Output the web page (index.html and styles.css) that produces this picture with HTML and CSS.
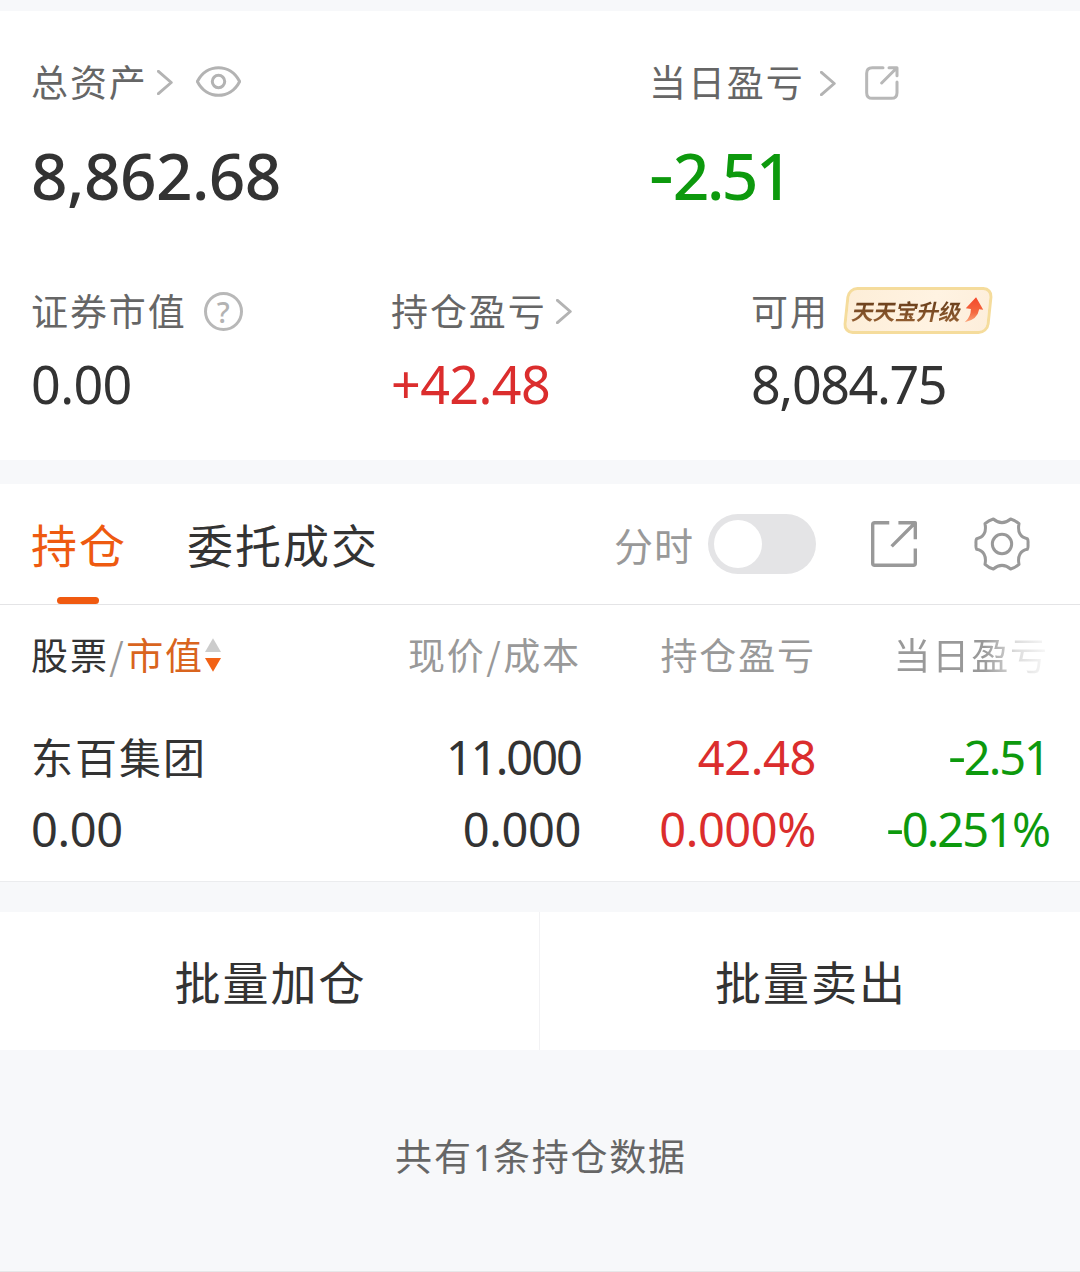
FILE: index.html
```html
<!DOCTYPE html>
<html lang="zh-CN">
<head>
<meta charset="utf-8">
<title>持仓</title>
<link rel="stylesheet" href="styles.css">
</head>
<body>
<main class="page">
  <section class="summary">
    <div class="totals">
      <div class="total">
        <div class="label">
          <span>总资产</span>
          <svg class="chevron chevron-total" viewBox="0 0 48 76"><path d="M4 4 43 38 4 72"/></svg>
          <svg class="eye" viewBox="0 0 134 92"><path d="M4 46C32-9 102-9 130 46 102 101 32 101 4 46Z"/><circle cx="67" cy="46" r="18.5"/></svg>
        </div>
        <div class="amount">8,862.68</div>
      </div>
      <div class="total">
        <div class="label">
          <span>当日盈亏</span>
          <svg class="chevron chevron-day" viewBox="0 0 48 76"><path d="M4 4 43 38 4 72"/></svg>
          <svg class="share-small" viewBox="0 0 102 102"><path d="M54 5H22Q5 5 5 22V80Q5 97 22 97H79Q96 97 96 80V48M72 5H96V29M95 6 50 51"/></svg>
        </div>
        <div class="amount amount-day down"><span class="sign">-</span>2.51</div>
      </div>
    </div>
    <div class="figures">
      <div class="figure">
        <div class="label"><span>证券市值</span><span class="help">?</span></div>
        <div class="value">0.00</div>
      </div>
      <div class="figure">
        <div class="label">
          <span>持仓盈亏</span>
          <svg class="chevron chevron-hold" viewBox="0 0 48 76"><path d="M4 4 43 38 4 72"/></svg>
        </div>
        <div class="value value-hold up">+42.48</div>
      </div>
      <div class="figure">
        <div class="label">
          <span>可用</span>
          <span class="badge">
            <span class="badge-text">天天宝升级</span>
            <svg class="badge-arrow" viewBox="0 0 56 76">
              <defs><linearGradient id="rise" x1="0" y1="0" x2="0" y2="1"><stop offset="0" stop-color="#f4472a"/><stop offset=".6" stop-color="#f4683f"/><stop offset="1" stop-color="#fba67c"/></linearGradient></defs>
              <path fill="url(#rise)" d="M34 1 55 37 43 36Q39 66 1 74 19 58 19 35L4 33Z"/>
            </svg>
          </span>
        </div>
        <div class="value value-free">8,084.75</div>
      </div>
    </div>
  </section>

  <section class="holdings">
    <nav class="tabs">
      <span class="tab tab-active">持仓</span>
      <span class="tab">委托成交</span>
      <div class="tools">
        <span class="tool-label">分时</span>
        <span class="switch"><span class="knob"></span></span>
        <svg class="share" viewBox="0 0 136 136"><path d="M54 5H11Q5 5 5 11V125Q5 131 11 131H125Q131 131 131 125V81M81 5H131V54M130 6 61 75"/></svg>
        <svg class="gear" viewBox="-90 -90 180 180"><path d="M-26-75Q0-53 26-75 40-71 51-61C46-36 55-20 76-16Q79-12 78 0 79 12 76 16C55 20 46 36 51 61Q40 71 26 75 0 53-26 75-40 71-51 61C-46 36-55 20-76 16Q-79 12-78 0-79-12-76-16C-55-20-46-36-51-61Q-40-71-26-75Z"/><circle r="29"/></svg>
      </div>
    </nav>

    <div class="row head">
      <div class="cell first"><span class="dark">股票</span><span class="slash">/</span><span class="accent">市值</span><svg class="sort" viewBox="0 0 49 103"><path fill="#ccc" d="M24.500 0 49 42H0Z"/><path fill="#f26215" d="M0 61H49L24.500 103Z"/></svg></div>
      <div class="cell">现价<span class="slash">/</span>成本</div>
      <div class="cell">持仓盈亏</div>
      <div class="cell fade">当日盈亏</div>
    </div>
    <div class="row name-row">
      <div class="cell first stock">东百集团</div>
      <div class="cell num price">11.000</div>
      <div class="cell num up hold">42.48</div>
      <div class="cell num down day"><span class="sign">-</span>2.51</div>
    </div>
    <div class="row rate-row">
      <div class="cell first num">0.00</div>
      <div class="cell num">0.000</div>
      <div class="cell num up">0.000%</div>
      <div class="cell num down rate"><span class="sign">-</span>0.251%</div>
    </div>
  </section>

  <section class="actions">
    <div class="action">批量加仓</div>
    <div class="action">批量卖出</div>
  </section>

  <footer class="note">共有<span class="count">1</span>条持仓数据</footer>
</main>
</body>
</html>
```
FILE: styles.css
```css
* { box-sizing: border-box; }

body {
  margin: 0;
  background: #f7f8fa;
  color: #333;
  font-family: "Noto Sans CJK SC", sans-serif;
}

svg { display: block; flex: none; fill: none; stroke-linecap: round; stroke-linejoin: round; }

.page {
  display: flex;
  flex-direction: column;
  width: 1080px;
  height: 1272px;
  padding-top: 11px;
  border-bottom: 1px solid #e6e7e9;
  background: #f7f8fa;
  white-space: nowrap;
}

.up { color: #db2d2d; }
.down { color: #0d990d; }

/* account summary */
.summary { height: 449px; padding: 46px 0 0 31px; background: #fff; }
.totals { display: grid; grid-template-columns: 618px 1fr; }
.figures { display: grid; grid-template-columns: 360px 360px 1fr; margin-top: 72px; }

.label {
  display: flex;
  align-items: center;
  height: 48px;
  font-size: 37px;
  line-height: 48px;
  letter-spacing: 1.9px;
  color: #666;
}

.chevron { width: 16px; height: 25px; stroke: #b3b3b3; stroke-width: 9; }
.chevron-total { margin: 3px 0 0 9px; }
.chevron-day { margin: 4px 0 0 15px; }
.chevron-hold { margin: 2px 0 0 9px; }
.eye { width: 45px; height: 31px; margin: 1px 0 0 23px; stroke: #b3b3b3; stroke-width: 9; }
.share-small { width: 34px; height: 34px; margin: 4px 0 0 29px; stroke: #b8b8b8; stroke-width: 9; }

.help {
  width: 39px;
  height: 39px;
  margin: 3px 0 0 17px;
  border: 3px solid #b8b8b8;
  border-radius: 50%;
  font: 500 29px/33px "Noto Sans", sans-serif;
  letter-spacing: 0;
  text-align: center;
  color: #b3b3b3;
}

.amount {
  height: 76px;
  margin-top: 33px;
  font: 500 64px/76px "Noto Sans", sans-serif;
  letter-spacing: -.6px;
}
.amount-day { letter-spacing: -2.5px; }

/* minus sign sits a little higher and wider than the font's own hyphen */
.sign {
  display: inline-block;
  margin-right: .06em;
  line-height: 1;
  transform: translateY(-.05em) scaleX(1.2);
  transform-origin: 0 50%;
}
.amount .sign { margin-right: .09em; }

.value {
  height: 60px;
  margin-top: 20px;
  font: 400 52px/60px "Noto Sans", sans-serif;
  letter-spacing: -.6px;
}
.value-free { letter-spacing: -1.4px; }

.badge {
  position: relative;
  z-index: 0;
  display: flex;
  align-items: center;
  width: 150px;
  height: 47px;
  margin: 1px 0 0 14px;
  padding-left: 10px;
}
.badge::before {
  content: "";
  position: absolute;
  z-index: -1;
  inset: 0 2px;
  border: 3px solid #f5dc9c;
  border-radius: 10px;
  background: linear-gradient(100deg, #fdeed8, #fff3e2 60%, #fdeedb);
  transform: skewX(-6deg);
}
.badge-text {
  background: linear-gradient(#5b3414, #9a6435);
  background-clip: text;
  color: transparent;
  font-size: 22px;
  font-weight: 700;
  line-height: 32px;
  letter-spacing: -.3px;
  transform: translateY(-1px) skewX(-12deg);
}
.badge-arrow { width: 20px; height: 26px; margin: -2px 0 0 3px; }

/* holdings */
.holdings {
  height: 398px;
  margin-top: 24px;
  border-bottom: 1px solid #ebecee;
  background: #fff;
}

.tabs {
  display: flex;
  height: 121px;
  padding: 0 50px 0 31px;
  border-bottom: 1px solid #e4e4e6;
}
.tab {
  margin-right: 60px;
  font-size: 46px;
  line-height: 119px;
  letter-spacing: 2px;
}
.tab-active { position: relative; color: #ee5a10; }
.tab-active::after {
  content: "";
  position: absolute;
  left: 26px;
  bottom: 0;
  width: 42px;
  height: 7px;
  border-radius: 4px;
  background: #f05a10;
}

.tools { display: flex; align-items: center; margin-left: auto; }
.tool-label { margin-right: 14px; font-size: 39px; line-height: 119px; letter-spacing: 1px; color: #999; }
.switch { width: 108px; height: 60px; padding: 6px; border-radius: 30px; background: #e4e4e6; }
.knob { display: block; width: 48px; height: 48px; border-radius: 50%; background: #fff; }
.share { width: 46px; height: 46px; margin-left: 55px; stroke: #999; stroke-width: 10; stroke-linecap: butt; }
.gear { width: 60px; height: 60px; margin: 0 -2px 0 55px; stroke: #999; stroke-width: 9; }

.row {
  display: grid;
  grid-template-columns: 250px 300px 235px 233px;
  padding-left: 31px;
}
.cell { text-align: right; }
.first { text-align: left; }

.head { height: 96px; font-size: 37px; line-height: 98px; letter-spacing: 1.9px; color: #999; }
.head .first { display: flex; }
.slash { margin: 0 .5px; }
.dark { color: #333; }
.accent { color: #d9641e; }
.sort { width: 16px; height: 34px; margin: 33px 0 0 1px; }
.fade {
  background: linear-gradient(90deg, #999 72%, #ddd 86%, #f5f5f5 98%);
  background-clip: text;
  color: transparent;
}

.num { font-family: "Noto Sans", sans-serif; font-size: 47px; letter-spacing: -.4px; }
.name-row { height: 100px; line-height: 112px; }
.rate-row { height: 64px; line-height: 57px; }
.stock { font-size: 42px; line-height: 110px; letter-spacing: 2px; }
.price { letter-spacing: -2px; }
.day { letter-spacing: -2px; }
.rate { letter-spacing: -2px; }

/* batch buttons */
.actions {
  display: grid;
  grid-template-columns: 1fr 1fr;
  height: 138px;
  margin-top: 30px;
  background: #fff;
}
.action { padding-left: 2px; font-size: 46px; line-height: 137px; letter-spacing: 2px; text-align: center; }
.action:first-child { border-right: 1px solid #f2f2f4; }

.note {
  margin-top: 79px;
  padding-left: 2px;
  font-size: 37px;
  line-height: 52px;
  letter-spacing: 1.800px;
  text-align: center;
  color: #666;
}
.count { font-family: "Noto Sans", sans-serif; letter-spacing: -1px; }
```
